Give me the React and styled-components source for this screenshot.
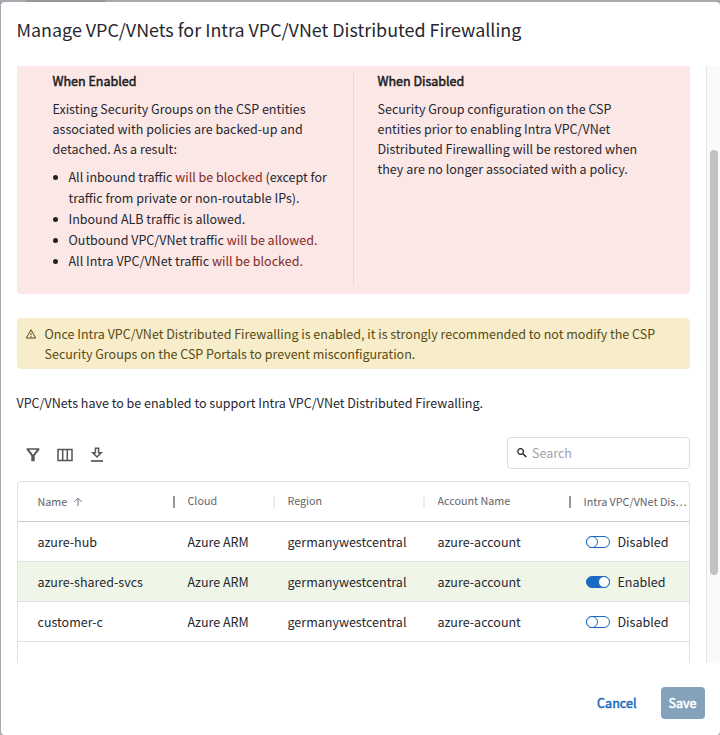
import React from "react";
import styled, { createGlobalStyle, css } from "styled-components";

const GlobalStyle = createGlobalStyle`
  *, *::before, *::after { box-sizing: border-box; }
  body {
    margin: 0;
    font-family: "Noto Sans CJK SC", "Noto Sans", sans-serif;
    font-size: 12.53px;
    line-height: 20px;
    color: #27282f;
    overflow: hidden;
  }
  button, input { font: inherit; }
`;

const Backdrop = styled.div`
  width: 720px;
  height: 735px;
  padding: 2px 0 0 1px;
  background:
    linear-gradient(#98979d, #98979d) 26px 0 / 79px 2px no-repeat,
    #a9a8ae;
`;

const Dialog = styled.section`
  display: flex;
  flex-direction: column;
  height: 733px;
  background: #fff;
  border-radius: 4px;
`;

const DialogTitle = styled.h2`
  flex: none;
  height: 64px;
  margin: 0;
  padding: 13px 16px 0 15.5px;
  font-size: 17.9px;
  font-weight: 400;
  line-height: 28px;
  white-space: nowrap;
`;

const DialogBody = styled.div`
  flex: none;
  display: flex;
  height: 597px;
  overflow: hidden;
`;

const Content = styled.div`
  flex: 1;
  padding: 0 16px;
`;

const ScrollTrack = styled.div`
  flex: none;
  width: 14px;
  padding: 84px 2px 0 3px;
  border-left: 1px solid #e4e4e4;
  background: #fafafa;
`;

const ScrollThumb = styled.div`
  width: 8px;
  height: 425px;
  border-radius: 4px;
  background: #c1c1c1;
`;

const ImpactPanel = styled.div`
  display: flex;
  height: 228px;
  padding: 5px 36px 8px 35.5px;
  border-radius: 0 0 4px 4px;
  background: #fbe7e6;
`;

const ImpactColumn = styled.div`
  width: ${(p) => p.$width}px;
  padding-left: ${(p) => p.$indent || 0}px;
  border-right: ${(p) => (p.$divided ? "1px solid #ecd6d8" : "0")};
  white-space: nowrap;
`;

const strong = css`
  font-weight: 400;
  -webkit-text-stroke: 0.5px currentColor;
`;

const ImpactHeading = styled.h3`
  ${strong}
  margin: 0 0 8px;
  font-size: 12.5px;
  line-height: 20px;
  color: #1b1c22;
`;

const Paragraph = styled.p`
  margin: 0;
`;

const BulletList = styled.ul`
  margin: 7px 0 0;
  padding-left: 16px;
  list-style: none;
  line-height: 21px;
`;

const Bullet = styled.li`
  &::before {
    content: "";
    float: left;
    width: 5.5px;
    height: 5.5px;
    margin: 8.5px 0 0 -15.75px;
    border-radius: 50%;
    background: #222;
  }
`;

const Danger = styled.span`
  color: #842a23;
`;

const Warning = styled.div`
  display: flex;
  height: 51px;
  margin-top: 24px;
  padding: 6px 8px;
  border-radius: 4px;
  background: #f7edca;
  color: #574b12;
  white-space: nowrap;

  svg { flex: none; margin: 4px 7.5px 0 0; }
`;

const SupportNote = styled.p`
  margin: 24px 0 0 -0.5px;
  white-space: nowrap;
`;

const Toolbar = styled.div`
  display: flex;
  align-items: center;
  height: 32px;
  margin-top: 24px;
  padding-left: 8px;
  gap: 16px;
  color: #55555d;
`;

const ToolButton = styled.button`
  display: grid;
  place-items: center;
  width: 16px;
  height: 16px;
  margin-top: 4px;
  padding: 0;
  border: 0;
  background: none;
  color: inherit;
`;

const SearchField = styled.label`
  display: flex;
  align-items: center;
  gap: 4px;
  width: 183px;
  height: 32px;
  margin-left: auto;
  padding-left: 8px;
  border: 1px solid #dedee1;
  border-radius: 4px;
  color: #1f1f24;
`;

const SearchInput = styled.input`
  width: 140px;
  height: 20px;
  padding: 0;
  border: 0;
  outline: 0;
  background: none;
  &::placeholder { color: #a3a3a7; opacity: 1; }
`;

const Grid = styled.div`
  height: 230px;
  margin-top: 12px;
  border: 1px solid #dfdfe2;
  border-radius: 4px;
`;

const GridRow = styled.div`
  display: grid;
  grid-template-columns: 150px 100px 150px 146px 1fr;
  align-items: center;
  height: 40px;
  padding-left: 19.5px;
  border-bottom: 1px solid #e0e0e2;
  background: ${(p) => (p.$selected ? "#eff6e8" : "transparent")};
  white-space: nowrap;
`;

const HeaderRow = styled(GridRow)`
  padding-bottom: 2px;
  border-color: #c9c9ce;
  color: #63636a;
  font-size: 10.75px;
`;

const HeaderCell = styled.div`
  display: flex;
  align-items: center;
  height: 20px;
  padding-top: ${(p) => (p.$sortable ? 2 : 0)}px;
  overflow: hidden;

  svg { margin-left: 6px; }
`;

const Separator = styled.i`
  flex: none;
  width: 2px;
  height: 12px;
  margin: ${(p) => (p.$sortable ? "0" : "2px")} 12.5px 0 auto;
  background: ${(p) => (p.$light ? "#ededf0" : "#96969c")};
`;

const ToggleCell = styled.div`
  display: flex;
  align-items: center;
  gap: 7.5px;
  padding-left: 2.5px;
`;

const Switch = styled.span`
  display: flex;
  justify-content: ${(p) => (p.$on ? "flex-end" : "flex-start")};
  width: 24px;
  height: 12px;
  border: 1px solid #1b6ac0;
  border-radius: 6px;
  background: ${(p) => (p.$on ? "#1b6ac0" : "#fff")};

  &::before {
    content: "";
    width: 12px;
    height: 12px;
    margin: -1px;
    border: 1px solid #1b6ac0;
    border-radius: 50%;
    background: #fff;
  }
`;

const Actions = styled.footer`
  display: flex;
  justify-content: flex-end;
  gap: 17px;
  padding: 24px 15px 0;
`;

const Button = styled.button`
  ${strong}
  height: 32px;
  padding: 0 ${(p) => (p.$primary ? "1px 0 0" : "7.5px 0 7px")};
  width: ${(p) => (p.$primary ? "44px" : "auto")};
  border: 0;
  border-radius: 4px;
  font-size: 12.6px;
  background: ${(p) => (p.$primary ? "#84a2bb" : "transparent")};
  color: ${(p) => (p.$primary ? "#fff" : "#1b6ac0")};
`;

const WarningIcon = () => (
  <svg width="12" height="12" viewBox="0 0 12 12" fill="none" stroke="currentColor">
    <path d="M6 1.8 1.3 10h9.4Z" strokeWidth="1" />
    <path d="M6 4.8v2.5M6 8v1.2" strokeWidth="1" />
  </svg>
);

const FilterIcon = () => (
  <svg width="16" height="16" viewBox="0 0 16 16">
    <path
      fill="currentColor"
      fillRule="evenodd"
      d="M1.6 1.2h12.8v1.5L9.7 8.8v5.4H6.3V8.8L1.6 2.7ZM4.2 2.8 8 7.7l3.8-4.9Z"
    />
  </svg>
);

const ColumnsIcon = () => (
  <svg width="16" height="16" viewBox="0 0 16 16" fill="none" stroke="currentColor">
    <path d="M1 2.5h14v11H1Z" strokeWidth="1.5" />
    <path d="M5.7 2.5v11M10.3 2.5v11" strokeWidth="1.5" />
  </svg>
);

const DownloadIcon = () => (
  <svg width="16" height="16" viewBox="0 0 16 16" fill="none" stroke="currentColor">
    <path d="M6.4 1.3h3.2v4.5h2.6L8 10 3.8 5.8h2.6Z" strokeWidth="1.5" />
    <path d="M2 14h12" strokeWidth="1.7" />
  </svg>
);

const SearchIcon = () => (
  <svg width="12" height="12" viewBox="0 0 12 12" fill="none" stroke="currentColor">
    <circle cx="4.6" cy="4.5" r="2.8" strokeWidth="1.2" />
    <path d="m6.8 6.7 3.5 3.4" strokeWidth="1.4" />
  </svg>
);

const SortIcon = () => (
  <svg width="10" height="10" viewBox="0 0 10 10" fill="none" stroke="#77777e">
    <path d="M5 9V1.2M1.2 5 5 1.2 8.8 5" />
  </svg>
);

const vnets = [
  { name: "azure-hub", enabled: false },
  { name: "azure-shared-svcs", enabled: true },
  { name: "customer-c", enabled: false },
];

export default function App() {
  return (
    <>
      <GlobalStyle />
      <Backdrop>
        <Dialog role="dialog">
          <DialogTitle>Manage VPC/VNets for Intra VPC/VNet Distributed Firewalling</DialogTitle>
          <DialogBody>
            <Content>
              <ImpactPanel>
                <ImpactColumn $width={301.5} $divided>
                  <ImpactHeading>When Enabled</ImpactHeading>
                  <Paragraph>
                    Existing Security Groups on the CSP entities
                    <br />
                    associated with policies are backed-up and
                    <br />
                    detached. As a result:
                  </Paragraph>
                  <BulletList>
                    <Bullet>
                      All inbound traffic <Danger>will be blocked</Danger> (except for
                      <br />
                      traffic from private or non-routable IPs).
                    </Bullet>
                    <Bullet>Inbound ALB traffic is allowed.</Bullet>
                    <Bullet>
                      Outbound VPC/VNet traffic <Danger>will be allowed.</Danger>
                    </Bullet>
                    <Bullet>
                      All Intra VPC/VNet traffic <Danger>will be blocked.</Danger>
                    </Bullet>
                  </BulletList>
                </ImpactColumn>
                <ImpactColumn $width={300} $indent={23.5}>
                  <ImpactHeading>When Disabled</ImpactHeading>
                  <Paragraph>
                    Security Group configuration on the CSP
                    <br />
                    entities prior to enabling Intra VPC/VNet
                    <br />
                    Distributed Firewalling will be restored when
                    <br />
                    they are no longer associated with a policy.
                  </Paragraph>
                </ImpactColumn>
              </ImpactPanel>

              <Warning>
                <WarningIcon />
                <Paragraph>
                  Once Intra VPC/VNet Distributed Firewalling is enabled, it is strongly recommended to not modify the CSP
                  <br />
                  Security Groups on the CSP Portals to prevent misconfiguration.
                </Paragraph>
              </Warning>

              <SupportNote>
                VPC/VNets have to be enabled to support Intra VPC/VNet Distributed Firewalling.
              </SupportNote>

              <Toolbar>
                <ToolButton aria-label="Filter"><FilterIcon /></ToolButton>
                <ToolButton aria-label="Columns"><ColumnsIcon /></ToolButton>
                <ToolButton aria-label="Download"><DownloadIcon /></ToolButton>
                <SearchField>
                  <SearchIcon />
                  <SearchInput placeholder="Search" />
                </SearchField>
              </Toolbar>

              <Grid>
                <HeaderRow>
                  <HeaderCell $sortable>
                    Name <SortIcon />
                    <Separator $sortable />
                  </HeaderCell>
                  <HeaderCell>
                    Cloud
                    <Separator $light />
                  </HeaderCell>
                  <HeaderCell>
                    Region
                    <Separator $light />
                  </HeaderCell>
                  <HeaderCell>
                    Account Name
                    <Separator />
                  </HeaderCell>
                  <HeaderCell $sortable>Intra VPC/VNet Dis…</HeaderCell>
                </HeaderRow>
                {vnets.map((v) => (
                  <GridRow key={v.name} $selected={v.enabled}>
                    <span>{v.name}</span>
                    <span>Azure ARM</span>
                    <span>germanywestcentral</span>
                    <span>azure-account</span>
                    <ToggleCell>
                      <Switch $on={v.enabled} />
                      {v.enabled ? "Enabled" : "Disabled"}
                    </ToggleCell>
                  </GridRow>
                ))}
              </Grid>
            </Content>
            <ScrollTrack>
              <ScrollThumb />
            </ScrollTrack>
          </DialogBody>
          <Actions>
            <Button>Cancel</Button>
            <Button $primary>Save</Button>
          </Actions>
        </Dialog>
      </Backdrop>
    </>
  );
}
